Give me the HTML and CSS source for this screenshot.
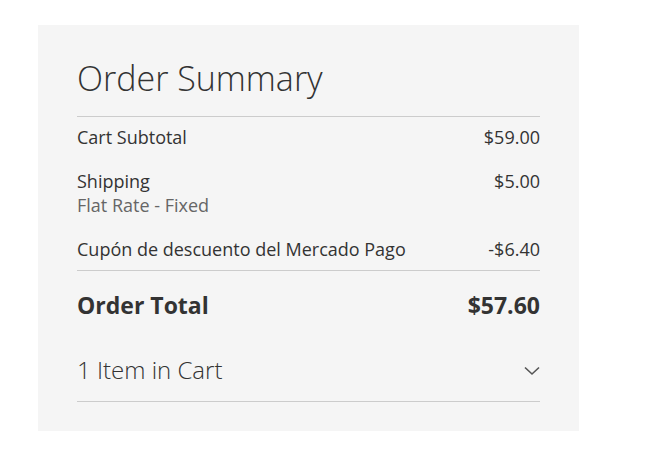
FILE: index.html
```html
<!DOCTYPE html>
<html lang="en">
<head>
<meta charset="utf-8">
<title>Order Summary</title>
<link rel="stylesheet" href="styles.css">
</head>
<body>
<div class="summary">
  <h2 class="title">Order Summary</h2>
  <div class="totals">
    <div class="row">
      <div class="label">Cart Subtotal</div>
      <div class="amount">$59.00</div>
    </div>
    <div class="row">
      <div class="label">Shipping<div class="sub">Flat Rate - Fixed</div></div>
      <div class="amount">$5.00</div>
    </div>
    <div class="row">
      <div class="label">Cupón de descuento del Mercado Pago</div>
      <div class="amount">-$6.40</div>
    </div>
  </div>
  <div class="grand">
    <div class="grand-label">Order Total</div>
    <div class="grand-amount">$57.60</div>
  </div>
  <div class="items">
    <span class="items-title">1 Item in Cart</span>
    <svg class="chev" width="16" height="10" viewBox="0 0 16 10" aria-hidden="true"><path d="M1 1.5 L8 8 L15 1.5" fill="none" stroke="#555" stroke-width="1.6"/></svg>
  </div>
</div>
</body>
</html>
```
FILE: styles.css
```css
html, body {
  margin: 0;
  padding: 0;
  background: #fff;
}
body {
  font-family: "Open Sans", "Liberation Sans", sans-serif;
  color: #333;
}
.summary {
  box-sizing: border-box;
  margin: 25px 0 0 38px;
  width: 541px;
  height: 406px;
  background: #f5f5f5;
  padding: 36px 39px 29px;
}
.title {
  margin: 0;
  font-size: 34px;
  line-height: 34px;
  font-weight: 300;
  padding-bottom: 21px;
  border-bottom: 1px solid #ccc;
}
.totals {
  display: flex;
  flex-direction: column;
  gap: 20px;
  padding: 8px 0 9px;
  border-bottom: 1px solid #ccc;
  font-size: 18px;
  line-height: 24px;
}
.row {
  display: flex;
  justify-content: space-between;
  align-items: flex-start;
}
.sub {
  color: #666;
}
.grand {
  display: flex;
  justify-content: space-between;
  padding-top: 19px;
  font-size: 23px;
  line-height: 30px;
  font-weight: 700;
}
.items {
  display: flex;
  justify-content: space-between;
  align-items: center;
  margin-top: 35px;
  padding-bottom: 16px;
  border-bottom: 1px solid #ccc;
}
.items-title {
  font-size: 24px;
  line-height: 30px;
  font-weight: 300;
}
.chev {
  display: block;
  margin-top: 2px;
}
```
